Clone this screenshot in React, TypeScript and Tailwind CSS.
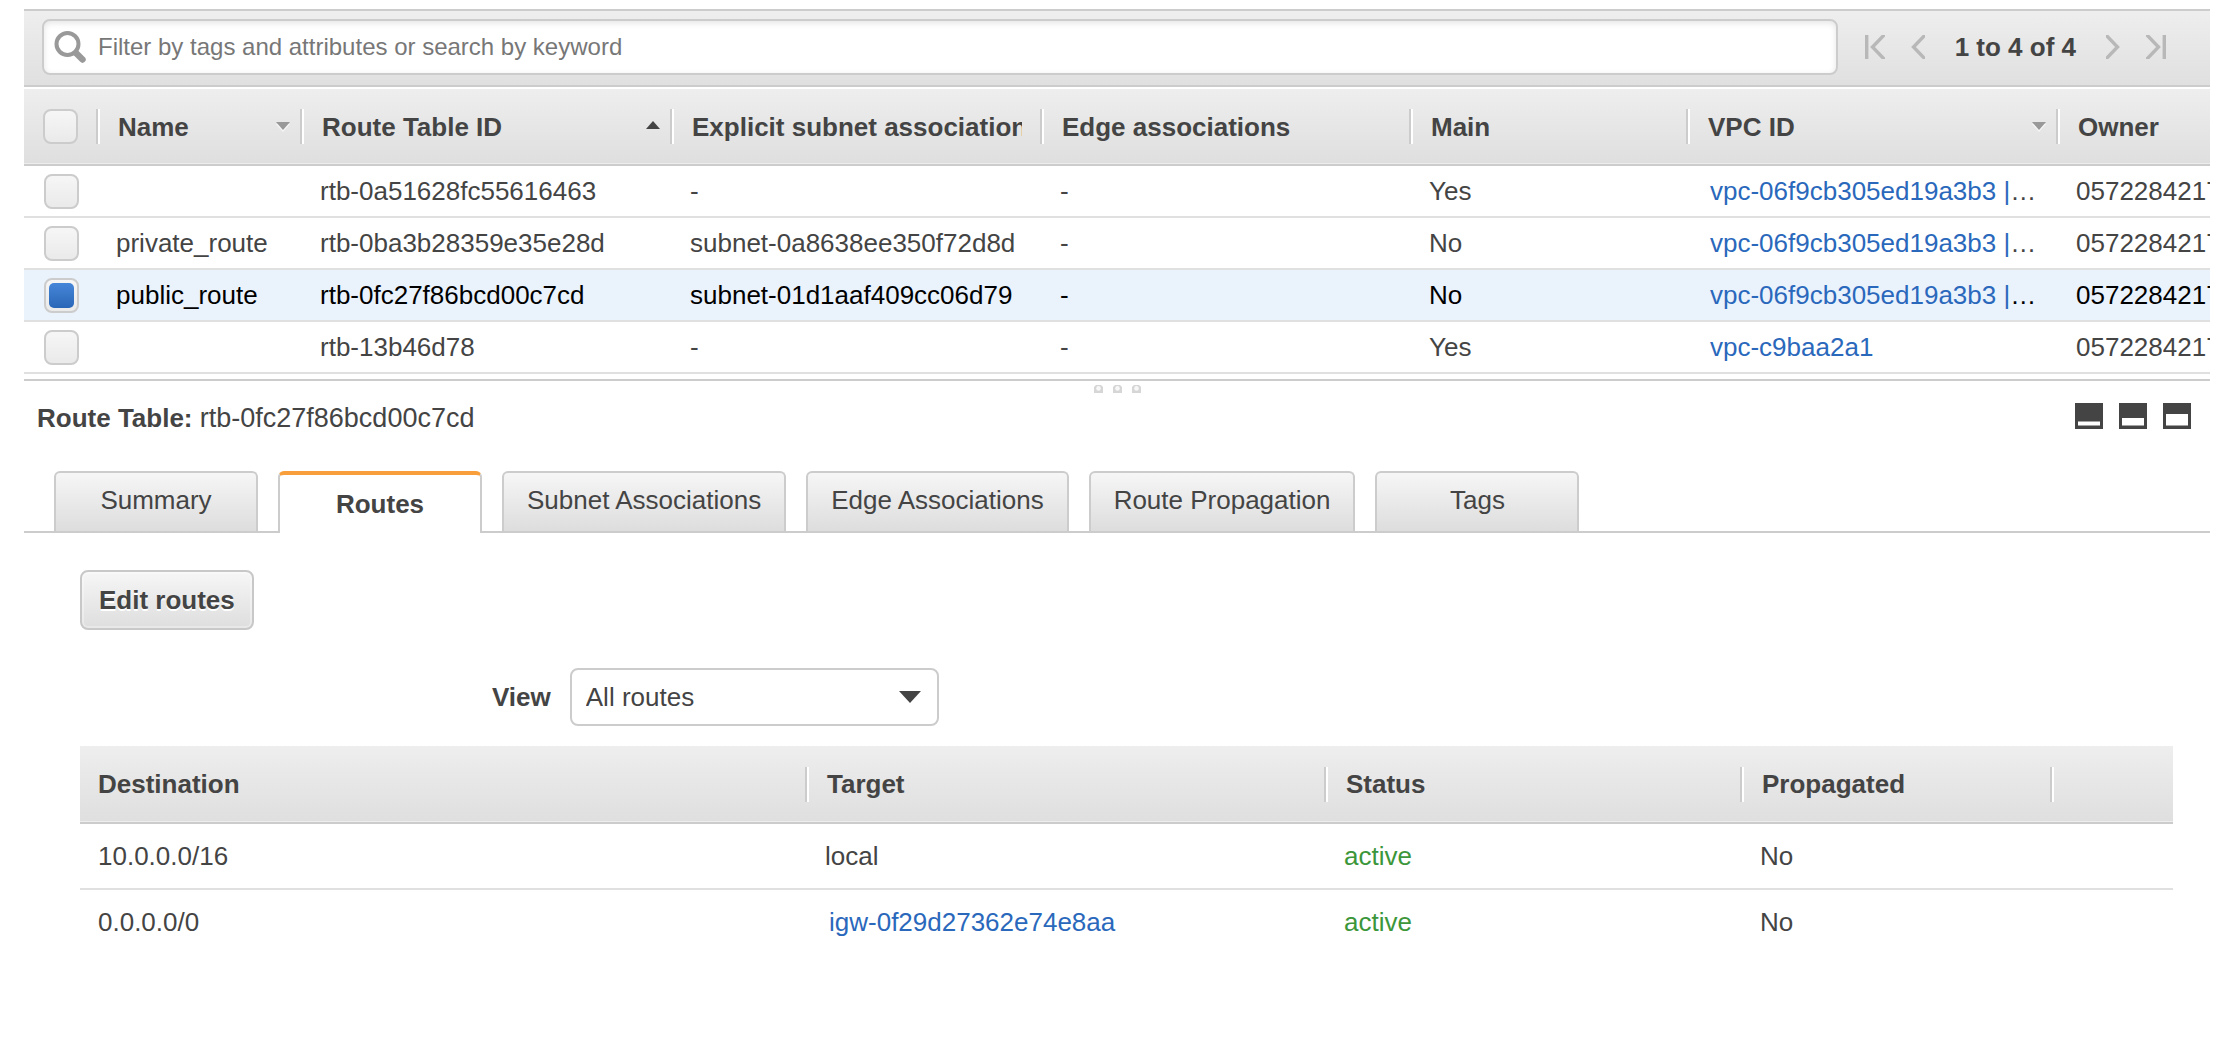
import { useState, type ReactNode } from "react";

type RouteTable = {
  id: string;
  name: string;
  subnet: string;
  edge: string;
  main: string;
  vpc: string;
  truncated: boolean;
  owner: string;
};

const routeTables: RouteTable[] = [
  { id: "rtb-0a51628fc55616463", name: "", subnet: "-", edge: "-", main: "Yes", vpc: "vpc-06f9cb305ed19a3b3 |", truncated: true, owner: "0572284217" },
  { id: "rtb-0ba3b28359e35e28d", name: "private_route", subnet: "subnet-0a8638ee350f72d8d", edge: "-", main: "No", vpc: "vpc-06f9cb305ed19a3b3 |", truncated: true, owner: "0572284217" },
  { id: "rtb-0fc27f86bcd00c7cd", name: "public_route", subnet: "subnet-01d1aaf409cc06d79", edge: "-", main: "No", vpc: "vpc-06f9cb305ed19a3b3 |", truncated: true, owner: "0572284217" },
  { id: "rtb-13b46d78", name: "", subnet: "-", edge: "-", main: "Yes", vpc: "vpc-c9baa2a1", truncated: false, owner: "0572284217" },
];

const routes = [
  { destination: "10.0.0.0/16", target: "local", link: false, status: "active", propagated: "No" },
  { destination: "0.0.0.0/0", target: "igw-0f29d27362e74e8aa", link: true, status: "active", propagated: "No" },
];

const tabs = ["Summary", "Routes", "Subnet Associations", "Edge Associations", "Route Propagation", "Tags"];

const separator = "border-r-2 border-white shadow-[inset_-2px_0_0_#cccccc]";
const checkboxClass =
  "grid size-[35px] shrink-0 appearance-none place-content-center rounded-lg border-2 border-[#cccccc] bg-linear-to-b from-[#f6f6f6] to-[#eaeaea] checked:before:block checked:before:size-[25px] checked:before:rounded-[5px] checked:before:bg-linear-to-b checked:before:from-[#4686d8] checked:before:to-[#2a66b8] checked:before:content-['']";

function SortArrow({ up = false }: { up?: boolean }) {
  return up ? (
    <svg className="mb-1 h-2 w-3.5 shrink-0" viewBox="0 0 14 8" aria-hidden="true">
      <path d="M7 0 14 8H0Z" fill="#444444" />
    </svg>
  ) : (
    <svg className="h-2.5 w-3.5 shrink-0" viewBox="0 0 14 10" aria-hidden="true">
      <path d="M0 2H14L7 10Z" fill="#f6f6f6" />
      <path d="M0 0H14L7 8Z" fill="#999999" />
    </svg>
  );
}

function HeaderCell({ children, last = false }: { children?: ReactNode; last?: boolean }) {
  return (
    <th scope="col" className="p-0 text-left font-bold">
      <div className={last ? "flex h-[35px] items-center pl-[18px]" : `flex h-[35px] items-center justify-between gap-2 pr-3 pl-[18px] ${separator}`}>
        {children}
      </div>
    </th>
  );
}

function PagerButton({ label, wide = false, children }: { label: string; wide?: boolean; children: ReactNode }) {
  return (
    <button type="button" aria-label={label}>
      <svg
        className={wide ? "block h-6 w-5" : "block h-6 w-3.5"}
        viewBox={wide ? "0 0 20 24" : "0 0 14 24"}
        fill="none"
        stroke="#b8b8b8"
        strokeWidth="3.4"
        aria-hidden="true"
      >
        {children}
      </svg>
    </button>
  );
}

function PanelButton({ label, top }: { label: string; top: number }) {
  return (
    <button type="button" aria-label={label}>
      <svg className="block h-[26px] w-7" viewBox="0 0 28 26" aria-hidden="true">
        <rect width="28" height="26" fill="#444444" />
        <rect x="3" y={top} width="22" height={22.5 - top} fill="#ffffff" />
      </svg>
    </button>
  );
}

export default function App() {
  const [selected, setSelected] = useState("rtb-0fc27f86bcd00c7cd");
  const [activeTab, setActiveTab] = useState("Routes");

  return (
    <main className="pt-[9px] pr-[22px] pb-10 pl-6 font-['Liberation_Sans',Arial,sans-serif] text-[26px] leading-[30px] text-[#444444]">
      <div className="flex h-[78px] items-center border-y-2 border-[#cccccc] bg-linear-to-b from-[#eeeeee] to-[#e0e0e0] pr-11 pl-[18px]">
        <label className="mb-0.5 flex h-14 flex-1 items-center gap-2.5 rounded-lg border-2 border-[#cccccc] bg-white pl-2.5 shadow-[inset_0_2px_6px_#e4e4e4]">
          <svg className="size-8 shrink-0" viewBox="0 0 32 32" fill="none" stroke="#999999" aria-hidden="true">
            <circle cx="13.5" cy="13" r="11" strokeWidth="4" />
            <path d="M22 22 28.5 28.5" strokeWidth="6.4" strokeLinecap="round" />
          </svg>
          <input
            type="text"
            aria-label="Filter route tables"
            placeholder="Filter by tags and attributes or search by keyword"
            className="min-w-0 flex-1 bg-transparent pl-0.5 text-[24px] outline-none placeholder:text-[#777777]"
          />
        </label>
        <nav aria-label="Pagination" className="mb-0.5 ml-[27px] flex items-center gap-[26px]">
          <PagerButton label="First page" wide>
            <path d="M1.7 0V24M21 -2 7.5 12 21 26" />
          </PagerButton>
          <PagerButton label="Previous page">
            <path d="M16 -2 2.5 12 16 26" />
          </PagerButton>
          <span className="mx-1 font-bold whitespace-nowrap">1 to 4 of 4</span>
          <PagerButton label="Next page">
            <path d="M-2 -2 11.5 12 -2 26" />
          </PagerButton>
          <PagerButton label="Last page" wide>
            <path d="M-1 -2 12.5 12 -1 26M18.3 0V24" />
          </PagerButton>
        </nav>
      </div>

      <div className="overflow-hidden pt-0.5">
        <table className="w-full table-fixed border-collapse whitespace-nowrap">
          <colgroup>
            <col className="w-[76px]" />
            <col className="w-[204px]" />
            <col className="w-[370px]" />
            <col className="w-[370px]" />
            <col className="w-[369px]" />
            <col className="w-[277px]" />
            <col className="w-[370px]" />
            <col />
          </colgroup>
          <thead>
            <tr className="h-[76px] border-b-2 border-[#cccccc] bg-linear-to-b from-[#eeeeee] to-[#dfdfdf]">
              <th scope="col" className="p-0">
                <div className={`flex h-[35px] items-center pl-[19px] ${separator}`}>
                  <input type="checkbox" aria-label="Select all route tables" className={checkboxClass} />
                </div>
              </th>
              <HeaderCell>Name<SortArrow /></HeaderCell>
              <HeaderCell>Route Table ID<SortArrow up /></HeaderCell>
              <HeaderCell>
                <span className="mr-2 overflow-hidden">Explicit subnet associations</span>
              </HeaderCell>
              <HeaderCell>Edge associations</HeaderCell>
              <HeaderCell>Main</HeaderCell>
              <HeaderCell>VPC ID<SortArrow /></HeaderCell>
              <HeaderCell last>Owner</HeaderCell>
            </tr>
          </thead>
          <tbody>
            {routeTables.map((row) => {
              const isSelected = row.id === selected;
              return (
                <tr key={row.id} className={isSelected ? "h-[52px] border-b-2 border-[#e0e0e0] bg-[#eaf2fc] text-black" : "h-[52px] border-b-2 border-[#e0e0e0]"}>
                  <td className="p-0 pl-5">
                    <input
                      type="checkbox"
                      aria-label={`Select ${row.id}`}
                      checked={isSelected}
                      onChange={() => setSelected(row.id)}
                      className={checkboxClass}
                    />
                  </td>
                  <td className="overflow-hidden p-0 pl-4">{row.name}</td>
                  <td className="overflow-hidden p-0 pl-4">{row.id}</td>
                  <td className="overflow-hidden p-0 pl-4">{row.subnet}</td>
                  <td className="overflow-hidden p-0 pl-4">{row.edge}</td>
                  <td className="overflow-hidden p-0 pl-4">{row.main}</td>
                  <td className="overflow-hidden p-0 pl-5">
                    <a href="#vpc" className="text-[#2a68bc]">{row.vpc}</a>
                    {row.truncated && "…"}
                  </td>
                  <td className="overflow-hidden p-0 pl-4">{row.owner}</td>
                </tr>
              );
            })}
          </tbody>
        </table>
      </div>

      <div className="mt-[5px] flex h-4 items-end justify-center gap-2.5 border-t-2 border-[#cccccc]">
        {[0, 1, 2].map((dot) => (
          <svg key={dot} className="mb-0.5 h-2 w-[9px]" viewBox="0 0 9 8" aria-hidden="true">
            <path d="M2 0H7L9 2V8H0V2Z" fill="#d6d6d6" />
            <circle cx="4.5" cy="3.4" r="2.3" fill="#f8f8f8" />
          </svg>
        ))}
      </div>

      <section aria-label="Route table details">
        <div className="flex items-center justify-between pt-2 pr-[19px] pl-[13px]">
          <h2>
            <strong>Route Table:</strong> <span className="text-[27px]">{selected}</span>
          </h2>
          <div className="mb-1 flex gap-4">
            <PanelButton label="Minimize details" top={18.5} />
            <PanelButton label="Split view" top={15} />
            <PanelButton label="Maximize details" top={11} />
          </div>
        </div>

        <div role="tablist" className="mt-[38px] flex gap-5 border-b-2 border-[#cccccc] pl-[30px]">
          {tabs.map((tab) => (
            <button
              key={tab}
              type="button"
              role="tab"
              aria-selected={tab === activeTab}
              onClick={() => setActiveTab(tab)}
              className={
                tab === activeTab
                  ? "-mb-0.5 h-[62px] min-w-[204px] rounded-t-md border-x-2 border-t-4 border-x-[#cccccc] border-t-[#f89f3b] bg-white px-[23px] font-bold"
                  : "h-[60px] min-w-[204px] rounded-t-md border-2 border-b-0 border-[#cccccc] bg-linear-to-b from-[#f6f6f6] to-[#dddddd] px-[23px] pb-1"
              }
            >
              {tab}
            </button>
          ))}
        </div>

        <div className="pt-[37px] pr-[37px] pl-14">
          <button
            type="button"
            className="h-[60px] rounded-lg border-2 border-[#c8c8c8] bg-linear-to-b from-[#f6f6f6] to-[#dedede] px-[17px] font-bold shadow-[inset_0_0_0_2px_#ffffff50] text-shadow-[0_2px_0_#ffffff]"
          >
            Edit routes
          </button>

          <div className="mt-[38px] flex items-center pl-[412px]">
            <label htmlFor="route-view" className="font-bold">View</label>
            <div className="ml-[19px] grid w-[369px] items-center">
              <select
                id="route-view"
                className="col-start-1 row-start-1 h-[58px] w-full appearance-none rounded-lg border-2 border-[#cccccc] bg-white pr-12 pl-3.5"
              >
                <option>All routes</option>
              </select>
              <svg className="pointer-events-none col-start-1 row-start-1 mr-[18px] h-3 w-[22px] justify-self-end" viewBox="0 0 22 12" aria-hidden="true">
                <path d="M0 0H22L11 12Z" fill="#444444" />
              </svg>
            </div>
          </div>

          <table className="mt-5 w-full table-fixed border-collapse whitespace-nowrap">
            <colgroup>
              <col className="w-[729px]" />
              <col className="w-[519px]" />
              <col className="w-[416px]" />
              <col className="w-[310px]" />
              <col />
            </colgroup>
            <thead>
              <tr className="h-[77px] border-b-2 border-[#cccccc] bg-linear-to-b from-[#eeeeee] to-[#dfdfdf]">
                <HeaderCell>Destination</HeaderCell>
                <HeaderCell>Target</HeaderCell>
                <HeaderCell>Status</HeaderCell>
                <HeaderCell>Propagated</HeaderCell>
                <td />
              </tr>
            </thead>
            <tbody>
              {routes.map((route) => (
                <tr key={route.destination} className="h-[66px] border-b-2 border-[#e0e0e0] last:border-transparent">
                  <td className="p-0 pl-[18px]">{route.destination}</td>
                  <td className="p-0 pl-4">
                    {route.link ? (
                      <a href="#gateway" className="pl-1 text-[#2a68bc]">{route.target}</a>
                    ) : (
                      route.target
                    )}
                  </td>
                  <td className="p-0 pl-4 text-[#3c963a]">{route.status}</td>
                  <td className="p-0 pl-4">{route.propagated}</td>
                  <td />
                </tr>
              ))}
            </tbody>
          </table>
        </div>
      </section>
    </main>
  );
}
